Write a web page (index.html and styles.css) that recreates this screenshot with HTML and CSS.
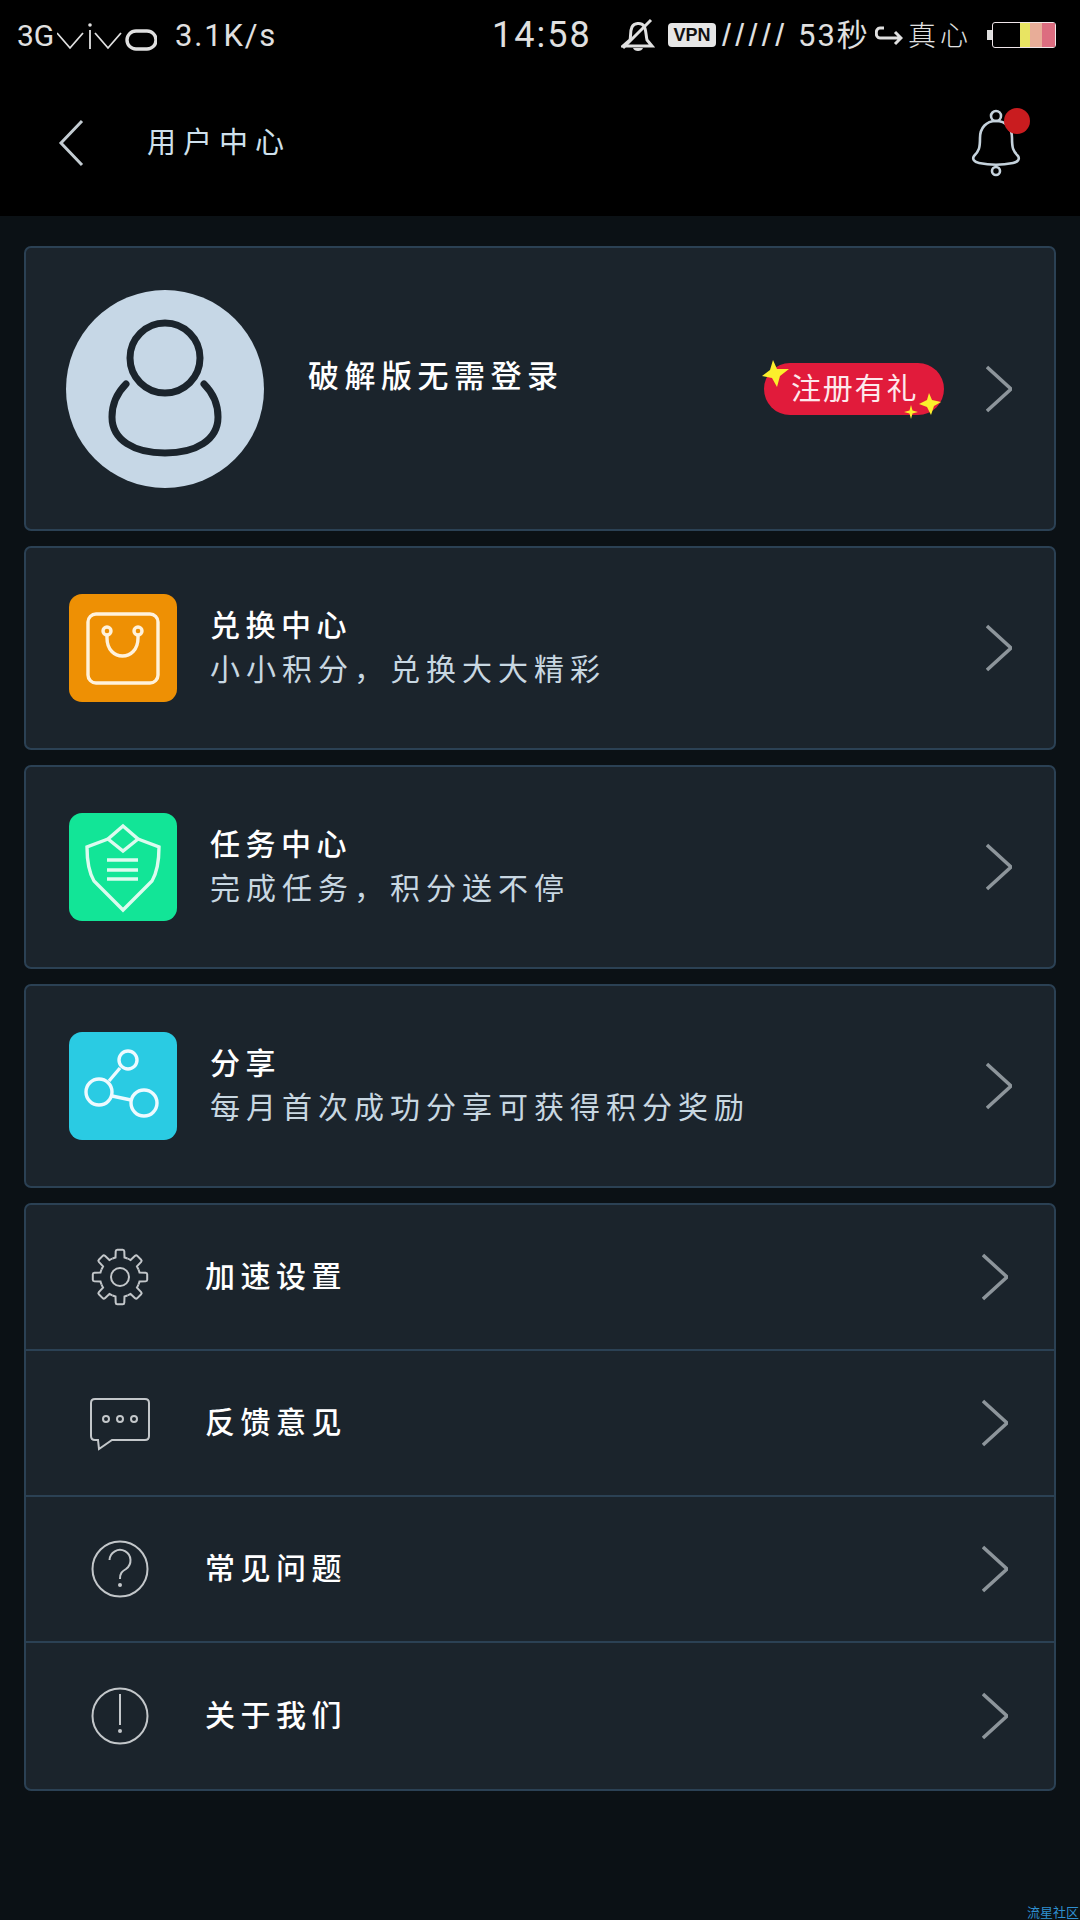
FILE: index.html
```html
<!DOCTYPE html>
<html lang="zh-CN">
<head>
<meta charset="utf-8">
<title>用户中心</title>
<link rel="stylesheet" href="styles.css">
</head>
<body>
<svg class="defs" width="0" height="0" aria-hidden="true">
  <defs>
    <path id="chev" d="M1 2 L25 24 L1 46"/>
    <path id="tooth" d="M-7.6 -18.4 A20 20 0 0 1 -4.5 -19.5 L-4.3 -25.6 Q-4.2 -27.2 -2.7 -27.2 L2.7 -27.2 Q4.2 -27.2 4.3 -25.6 L4.5 -19.5 A20 20 0 0 1 7.6 -18.4"/>
  </defs>
</svg>
<header class="top">
  <div class="status">
    <span class="st-3g">3G</span>
    <svg class="st-vivo" width="100" height="32" viewBox="0 0 100 32" role="img" aria-label="vivo logo">
      <path class="vivo-line" d="M0 14 L13 29 L26 14 M33 11 V30 M38 14 L51 29 L64 14"/>
      <circle class="vivo-dot" cx="33" cy="6" r="1.8"/>
      <rect class="vivo-o" x="70" y="12" width="29" height="18" rx="9"/>
    </svg>
    <span class="st-speed">3.1K/s</span>
    <span class="st-time">14:58</span>
    <svg class="st-mute" width="34" height="34" viewBox="0 0 34 34" aria-hidden="true">
      <path class="mute-line" d="M9 22 C10 18 9 13 11 9 C13 5 20 4 23 8 C25 11 25 18 26 22 L31 28 L2 28 L9 22"/>
      <path class="mute-line" d="M30 2 L2 30"/>
      <path class="mute-fill" d="M12 30 H22 C21 34 13 34 12 30Z"/>
    </svg>
    <span class="st-vpn">VPN</span>
    <span class="st-net">/////</span>
    <span class="st-sec">53秒</span>
    <svg class="st-arrow" width="28" height="22" viewBox="0 0 28 22" aria-hidden="true">
      <path class="mute-line" d="M9 4 H5 C0 4 0 14 5 14 H26 M20 8 L26 14 L20 20"/>
    </svg>
    <span class="st-carrier">真心</span>
    <span class="st-nub"></span>
    <div class="st-batt">
      <span class="batt-empty"></span>
      <span class="batt-y"></span>
      <span class="batt-p"></span>
      <span class="batt-r"></span>
    </div>
  </div>
  <nav class="navbar">
    <svg class="back" width="26" height="48" viewBox="0 0 26 48" aria-hidden="true"><path d="M24 2 L3 24 L24 46"/></svg>
    <h1 class="nav-title">用户中心</h1>
    <div class="bell">
      <svg width="50" height="68" viewBox="0 0 50 68" aria-hidden="true">
        <circle cx="25" cy="7" r="5"/>
        <path d="M25 12 C15 12 9 19 9 29 C9 39 8 42 3 47 C1 50 3 53 8 54 C18 56 32 56 42 54 C47 53 49 50 47 47 C42 42 41 39 41 29 C41 19 35 12 25 12Z"/>
        <circle cx="25" cy="62" r="4"/>
      </svg>
      <span class="bell-dot"></span>
    </div>
  </nav>
</header>

<main class="content">
  <section class="card card-user">
    <div class="avatar">
      <svg width="198" height="198" viewBox="0 0 198 198" aria-hidden="true">
        <circle cx="99" cy="68" r="35"/>
        <path d="M60 94 C50 104 46 114 46 127 C46 150 68 163 99 163 C130 163 152 150 152 127 C152 114 148 104 138 94"/>
      </svg>
    </div>
    <span class="user-name">破解版无需登录</span>
    <div class="promo">
      <span>注册有礼</span>
      <svg class="star star-a" width="30" height="30" viewBox="0 0 30 30" aria-hidden="true"><path d="M11 0 L15 9 L27 9 L18 16 L15 27 L10 18 L0 16 L8 10Z"/></svg>
      <svg class="star star-b" width="22" height="22" viewBox="0 0 22 22" aria-hidden="true"><path d="M10 0 L13 7 L22 9 L15 13 L12 22 L8 14 L0 11 L8 7Z"/></svg>
      <svg class="star star-c" width="14" height="14" viewBox="0 0 14 14" aria-hidden="true"><path d="M7 0 L8.5 5.5 L14 7 L8.5 8.5 L7 14 L5.5 8.5 L0 7 L5.5 5.5Z"/></svg>
    </div>
    <svg class="chev" width="26" height="48" viewBox="0 0 26 48" aria-hidden="true"><use href="#chev"/></svg>
  </section>

  <section class="card card-feature">
    <div class="tile tile-orange">
      <svg width="108" height="108" viewBox="0 0 108 108" aria-hidden="true">
        <rect x="19" y="20" width="70" height="69" rx="8"/>
        <circle cx="38" cy="37" r="4"/>
        <circle cx="69" cy="37" r="4"/>
        <path d="M38 41 V44 C38 68 69 68 69 44 V41"/>
      </svg>
    </div>
    <div class="feature-text">
      <strong class="f-title">兑换中心</strong>
      <span class="f-sub">小小积分，兑换大大精彩</span>
    </div>
    <svg class="chev" width="26" height="48" viewBox="0 0 26 48" aria-hidden="true"><use href="#chev"/></svg>
  </section>

  <section class="card card-feature">
    <div class="tile tile-green">
      <svg width="108" height="108" viewBox="0 0 108 108" aria-hidden="true">
        <path d="M54 13 L69 26 L54 38 L39 26Z"/>
        <path d="M39 26 L18 34 Q18 56 25 68 L54 97 L83 68 Q90 56 90 34 L69 26"/>
        <path d="M38 47 H69 M38 57 H69 M38 66 H69"/>
      </svg>
    </div>
    <div class="feature-text">
      <strong class="f-title">任务中心</strong>
      <span class="f-sub">完成任务，积分送不停</span>
    </div>
    <svg class="chev" width="26" height="48" viewBox="0 0 26 48" aria-hidden="true"><use href="#chev"/></svg>
  </section>

  <section class="card card-feature">
    <div class="tile tile-cyan">
      <svg width="108" height="108" viewBox="0 0 108 108" aria-hidden="true">
        <circle cx="59" cy="28" r="9"/>
        <circle cx="30" cy="60" r="13"/>
        <circle cx="75" cy="71" r="13"/>
        <path d="M51 36 L40 49 M43 64 L62 68"/>
      </svg>
    </div>
    <div class="feature-text">
      <strong class="f-title">分享</strong>
      <span class="f-sub">每月首次成功分享可获得积分奖励</span>
    </div>
    <svg class="chev" width="26" height="48" viewBox="0 0 26 48" aria-hidden="true"><use href="#chev"/></svg>
  </section>

  <section class="card card-list">
    <div class="row">
      <svg class="row-icon" width="60" height="60" viewBox="-30 -30 60 60" aria-hidden="true">
        <use href="#tooth"/>
        <use href="#tooth" transform="rotate(45)"/>
        <use href="#tooth" transform="rotate(90)"/>
        <use href="#tooth" transform="rotate(135)"/>
        <use href="#tooth" transform="rotate(180)"/>
        <use href="#tooth" transform="rotate(225)"/>
        <use href="#tooth" transform="rotate(270)"/>
        <use href="#tooth" transform="rotate(315)"/>
        <circle r="9"/>
      </svg>
      <span class="row-label">加速设置</span>
      <svg class="chev" width="26" height="48" viewBox="0 0 26 48" aria-hidden="true"><use href="#chev"/></svg>
    </div>
    <div class="row">
      <svg class="row-icon" width="60" height="60" viewBox="0 0 60 60" aria-hidden="true">
        <path d="M5 6 H55 Q59 6 59 10 V43 Q59 47 55 47 H22 L9 56 L8 47 H5 Q1 47 1 43 V10 Q1 6 5 6Z"/>
        <circle cx="16" cy="26" r="3"/>
        <circle cx="30" cy="26" r="3"/>
        <circle cx="44" cy="26" r="3"/>
      </svg>
      <span class="row-label">反馈意见</span>
      <svg class="chev" width="26" height="48" viewBox="0 0 26 48" aria-hidden="true"><use href="#chev"/></svg>
    </div>
    <div class="row">
      <svg class="row-icon" width="60" height="60" viewBox="0 0 60 60" aria-hidden="true">
        <circle cx="30" cy="30" r="27.5"/>
        <path d="M19.5 21 A10.5 10.5 0 1 1 36 30 C32 32.5 30 34 30 40"/>
        <circle class="icon-dot" cx="30" cy="46" r="2"/>
      </svg>
      <span class="row-label">常见问题</span>
      <svg class="chev" width="26" height="48" viewBox="0 0 26 48" aria-hidden="true"><use href="#chev"/></svg>
    </div>
    <div class="row">
      <svg class="row-icon" width="60" height="60" viewBox="0 0 60 60" aria-hidden="true">
        <circle cx="30" cy="30" r="27.5"/>
        <path d="M30 8 V39"/>
        <circle class="icon-dot" cx="30" cy="45" r="2"/>
      </svg>
      <span class="row-label">关于我们</span>
      <svg class="chev" width="26" height="48" viewBox="0 0 26 48" aria-hidden="true"><use href="#chev"/></svg>
    </div>
  </section>
</main>
<footer class="watermark">流星社区</footer>
</body>
</html>
```
FILE: styles.css
```css
* { box-sizing: border-box; }
html, body { margin: 0; padding: 0; }
body {
  width: 1080px;
  height: 1920px;
  overflow: hidden;
  background: #0b1115;
  font-family: "Noto Sans CJK SC", "Noto Sans", sans-serif;
  color: #fff;
  display: flex;
  flex-direction: column;
}
.defs { position: absolute; }

/* header */
.top { background: #000; height: 216px; flex: none; }
.status {
  height: 70px;
  padding-left: 17px;
  display: flex;
  align-items: center;
  color: #e0e0e0;
  font-family: Roboto, sans-serif;
  font-weight: 400;
  white-space: nowrap;
}
.st-3g { font-size: 30px; font-weight: 400; width: 37px; }
.st-vivo { margin-left: 3px; flex: none; }
.vivo-line { fill: none; stroke: #e0e0e0; stroke-width: 1.8; }
.vivo-dot { fill: #e0e0e0; }
.vivo-o { fill: none; stroke: #e0e0e0; stroke-width: 3.4; }
.st-speed { margin-left: 18px; font-size: 31px; letter-spacing: 1.8px; width: 100px; }
.st-time { margin-left: 217px; font-size: 36px; letter-spacing: 2px; width: 98px; }
.st-mute { margin-left: 31px; flex: none; }
.mute-line { fill: none; stroke: #e0e0e0; stroke-width: 3; }
.mute-fill { fill: #e0e0e0; }
.st-vpn {
  margin-left: 13px;
  width: 48px;
  height: 24px;
  border-radius: 4px;
  background: #e6e6e6;
  color: #111;
  font: 700 18px/24px "Liberation Sans", sans-serif;
  text-align: center;
}
.st-net {
  margin-left: 6px;
  width: 68px;
  font: 400 32px/1 "Liberation Sans", sans-serif;
  letter-spacing: 4.4px;
}
.st-sec {
  margin-left: 8px;
  width: 75px;
  padding-bottom: 6px;
  font-size: 31px;
  letter-spacing: 2px;
  font-family: Roboto, "Noto Sans CJK SC", sans-serif;
}
.st-arrow { flex: none; margin-left: 2px; }
.st-carrier {
  margin-left: 5px;
  width: 62px;
  padding-bottom: 2px;
  font: 300 28px/1 "Noto Sans CJK SC", sans-serif;
  letter-spacing: 4px;
}
.st-nub { margin-left: 17px; width: 5px; height: 10px; background: #ddd; }
.st-batt {
  width: 64px;
  height: 26px;
  border: 1.5px solid #f0e6ea;
  border-radius: 3px;
  display: flex;
}
.batt-empty { width: 27px; }
.batt-y { width: 10px; background: #e8e462; }
.batt-p { width: 12px; background: #e8ad98; }
.batt-r { flex: 1; background: #dc6d80; }

.navbar {
  height: 146px;
  padding: 0 59px 0 58px;
  display: flex;
  align-items: center;
}
.back { fill: none; stroke: #c3ccd2; stroke-width: 3; flex: none; }
.nav-title {
  margin: 0 0 0 63px;
  padding-bottom: 6px;
  flex: 1;
  font-size: 29px;
  font-weight: 400;
  letter-spacing: 7px;
  color: #cfe0ec;
}
.bell { position: relative; width: 50px; height: 68px; flex: none; }
.bell svg { display: block; fill: none; stroke: #c5d2dc; stroke-width: 2.6; }
.bell-dot {
  position: absolute;
  left: 33px;
  top: -1px;
  width: 26px;
  height: 26px;
  border-radius: 50%;
  background: #c91c1f;
}

/* cards */
.content {
  padding: 30px 24px 0;
  display: flex;
  flex-direction: column;
  gap: 15px;
}
.card {
  border: 2px solid #2b4154;
  border-radius: 7px;
  background: #1b242c;
}
.card-user, .card-feature, .row { display: flex; align-items: center; }
.card-user { height: 285px; padding: 0 42px 0 40px; }
.card-feature { height: 204px; padding: 0 42px 0 43px; }
.chev { fill: none; stroke: #8d959b; stroke-width: 3.4; flex: none; }

.avatar { width: 198px; height: 198px; border-radius: 50%; background: #c6d7e6; flex: none; }
.avatar svg { display: block; fill: none; stroke: #1b242c; stroke-width: 7; stroke-linecap: round; }
.user-name {
  margin: 0 0 31px 44px;
  flex: 1;
  font-size: 31px;
  font-weight: 500;
  letter-spacing: 5.5px;
}
.promo {
  position: relative;
  width: 180px;
  height: 52px;
  margin-right: 42px;
  border-radius: 26px;
  background: #e11b3b;
  font-size: 30px;
  line-height: 47px;
  padding-left: 27px;
  letter-spacing: 1.8px;
  color: #fde9ec;
  white-space: nowrap;
}
.star { position: absolute; fill: #fbef2c; }
.star-a { left: -2px; top: -3px; }
.star-b { left: 155px; top: 30px; }
.star-c { left: 140px; top: 42px; }

.tile { width: 108px; height: 108px; border-radius: 13px; flex: none; }
.tile svg { display: block; fill: none; stroke-width: 3.4; }
.tile-orange { background: #ee9004; }
.tile-orange svg { stroke: #fff2dc; }
.tile-green { background: #12e597; }
.tile-green svg { stroke: #dcfbef; }
.tile-cyan { background: #2acbe3; }
.tile-cyan svg { stroke: #eefaff; }

.feature-text { margin-left: 33px; padding-bottom: 7px; flex: 1; display: flex; flex-direction: column; }
.f-title, .f-sub { line-height: 44px; white-space: nowrap; }
.f-title { font-size: 30px; font-weight: 500; letter-spacing: 5.5px; }
.f-sub { font-size: 30px; font-weight: 400; letter-spacing: 6px; color: #c8d7e1; }

.card-list { height: 588px; }
.row { height: 146px; padding: 0 46px 0 64px; border-bottom: 2px solid #2b4154; }
.row:last-child { border-bottom: 0; }
.row-icon { fill: none; stroke: #c3c7ca; stroke-width: 2; flex: none; }
.icon-dot { fill: #c3c7ca; stroke: none; }
.row-label { margin-left: 55px; padding-bottom: 7px; flex: 1; font-size: 30px; font-weight: 500; letter-spacing: 5.5px; }

.watermark {
  margin-top: auto;
  padding-left: 1027px;
  height: 16px;
  font-size: 13px;
  line-height: 16px;
  color: #2f8fd0;
  white-space: nowrap;
}
```
